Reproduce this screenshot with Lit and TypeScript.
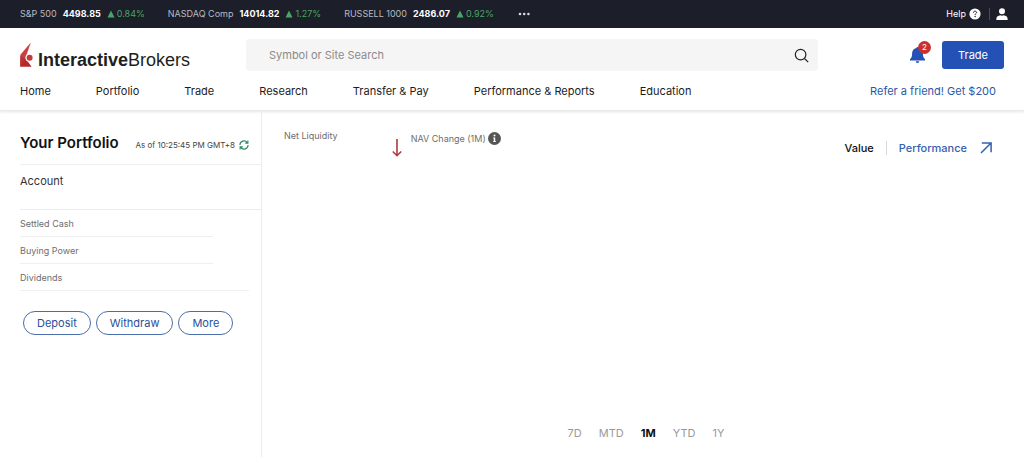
import { LitElement, html, css } from "lit";
import { customElement, state } from "lit/decorators.js";

interface Quote {
  name: string;
  price: string;
  change: string;
}

const QUOTES: Quote[] = [
  { name: "S&P 500", price: "4498.85", change: "0.84%" },
  { name: "NASDAQ Comp", price: "14014.82", change: "1.27%" },
  { name: "RUSSELL 1000", price: "2486.07", change: "0.92%" },
];

const NAV = [
  "Home",
  "Portfolio",
  "Trade",
  "Research",
  "Transfer & Pay",
  "Performance & Reports",
  "Education",
];

const PERIODS = ["7D", "MTD", "1M", "YTD", "1Y"];

const reset = css`
  * {
    box-sizing: border-box;
  }
  a {
    color: inherit;
    text-decoration: none;
  }
  button {
    font: inherit;
    color: inherit;
    background: none;
    border: 0;
    padding: 0;
    margin: 0;
    cursor: pointer;
  }
  svg {
    display: block;
    flex: none;
  }
`;

@customElement("ticker-bar")
class TickerBar extends LitElement {
  static styles = [
    reset,
    css`
      :host {
        display: flex;
        justify-content: space-between;
        align-items: center;
        height: 28px;
        padding: 0 16px 0 20px;
        background: #1c1e2a;
        color: #fff;
        font-size: 9px;
        line-height: 12px;
        white-space: nowrap;
      }
      .quotes,
      .tools,
      .quote,
      .change,
      .help {
        display: flex;
        align-items: center;
      }
      .quotes {
        gap: 23px;
      }
      .quote {
        gap: 6px;
      }
      .name {
        color: #b9bac0;
      }
      .price {
        font-weight: 700;
      }
      .change {
        gap: 2px;
        color: #4aa564;
      }
      .tools {
        gap: 6px;
      }
      .help {
        gap: 3px;
        padding-right: 2px;
      }
      .rule {
        width: 1px;
        height: 12px;
        background: #4b4d58;
      }
    `,
  ];

  render() {
    return html`
      <div class="quotes">
        ${QUOTES.map(
          (q) => html`<div class="quote">
            <span class="name">${q.name}</span>
            <span class="price">${q.price}</span>
            <span class="change">
              <svg width="8" height="8" viewBox="0 0 8 8"><path d="M4 .5 7.5 7.5H.5z" fill="currentColor" /></svg>
              ${q.change}
            </span>
          </div>`
        )}
        <button aria-label="More quotes">
          <svg width="14" height="6" viewBox="0 0 14 6" fill="#d8d9dd">
            <circle cx="3" cy="3" r="1.3" /><circle cx="7.2" cy="3" r="1.3" /><circle cx="11.4" cy="3" r="1.3" />
          </svg>
        </button>
      </div>
      <div class="tools">
        <a class="help" href="#">
          Help
          <svg width="12" height="12" viewBox="0 0 12 12">
            <circle cx="6" cy="6" r="5.6" fill="#fff" />
            <path d="M4.5 4.7C4.5 3.7 5.1 3.2 6 3.2s1.6.5 1.6 1.3c0 1-1.5 1.1-1.5 2.3" fill="none" stroke="#1c1e2a" stroke-width="1" />
            <circle cx="6.1" cy="8.5" r=".7" fill="#1c1e2a" />
          </svg>
        </a>
        <span class="rule"></span>
        <button aria-label="Account">
          <svg width="12" height="14" viewBox="0 0 12 14" fill="#fff">
            <circle cx="6" cy="4.3" r="3" />
            <path d="M.4 12.9v-1.4C.4 9.8 2.4 8.7 4.2 8.300c1.100.5 2.500.5 3.600 0 1.800.4 3.800 1.500 3.800 3.200v1.400z" />
          </svg>
        </button>
      </div>
    `;
  }
}

@customElement("site-header")
class SiteHeader extends LitElement {
  static styles = [
    reset,
    css`
      :host {
        display: block;
        background: #fff;
        border-bottom: 1px solid #e9e9e9;
        box-shadow: 0 1px 3px rgba(0, 0, 0, 0.1);
        padding: 11px 20px 0;
      }
      .top {
        display: grid;
        grid-template-columns: 226px minmax(0, 1fr) 186px;
        height: 32px;
      }
      .logo {
        display: flex;
        align-items: center;
        gap: 5px;
        font-family: "Liberation Sans", Arial, sans-serif;
        font-size: 18px;
        line-height: 20px;
        color: #1e1e20;
      }
      .word {
        padding-top: 10px;
      }
      .search {
        display: flex;
        align-items: center;
        background: #f5f5f5;
        border-radius: 4px;
        padding: 0 9px 0 23px;
      }
      .field {
        flex: 1;
        min-width: 0;
        font: inherit;
        line-height: 16px;
        color: #333;
        background: none;
        border: 0;
        outline: 0;
        padding: 0;
      }
      .field::placeholder {
        color: #8b8b8b;
        opacity: 1;
      }
      .actions {
        display: flex;
        justify-content: flex-end;
        align-items: center;
        gap: 16px;
      }
      .bell {
        position: relative;
      }
      .badge {
        position: absolute;
        top: -5px;
        right: -5px;
        width: 13px;
        height: 13px;
        border-radius: 50%;
        background: #c9302f;
        color: #fff;
        font-size: 8px;
        line-height: 13px;
        text-align: center;
      }
      .trade {
        width: 62px;
        height: 28px;
        border-radius: 3px;
        background: #2351b5;
        color: #fff;
      }
      .bottom {
        display: flex;
        justify-content: space-between;
        padding: 12px 8px 11px 0;
        line-height: 16px;
        white-space: nowrap;
      }
      .links {
        display: flex;
        gap: 45px;
        color: #1c1c1e;
      }
      .refer {
        color: #2b57a5;
      }
    `,
  ];

  render() {
    return html`
      <div class="top">
        <a class="logo" href="#">
          <svg width="13" height="26" viewBox="0 0 13 26">
            <path d="M10.8.5.4 12.8V24.800L5.600 15.800z" fill="#cb4041" />
            <path d="M.4 17.500V24.800h11.200L5.600 16.500z" fill="#b5292c" />
            <path d="M.4 14v10.800L5.600 16z" fill="#bd3033" />
            <circle cx="9.500" cy="15.800" r="4" fill="#fff" />
            <circle cx="9.600" cy="15.800" r="3" fill="#c6393a" />
          </svg>
          <span class="word"><b>Interactive</b>Brokers</span>
        </a>
        <div class="search">
          <input class="field" type="text" aria-label="Symbol or Site Search" placeholder="Symbol or Site Search" />
          <button aria-label="Search">
            <svg width="15" height="15" viewBox="0 0 15 15" fill="none" stroke="#222" stroke-width="1.2">
              <circle cx="6.6" cy="6.6" r="5.3" /><path d="m10.5 10.5 3.7 3.7" />
            </svg>
          </button>
        </div>
        <div class="actions">
          <button class="bell" aria-label="Notifications">
            <svg width="17" height="18" viewBox="0 0 17 18" fill="#2351b5">
              <path d="M8.5 1c.7 0 1.1.4 1.2 1.1 2.5.6 4.200 2.600 4.200 5.200 0 3.300.500 4.500 2.100 5.900v1.300H1v-1.300c1.600-1.400 2.100-2.600 2.100-5.900 0-2.600 1.700-4.600 4.200-5.200C7.400 1.400 7.800 1 8.500 1z" />
              <path d="M6.700 15.300h3.600a1.800 1.800 0 0 1-3.600 0z" />
            </svg>
            <span class="badge">2</span>
          </button>
          <button class="trade">Trade</button>
        </div>
      </div>
      <nav class="bottom">
        <div class="links">${NAV.map((n) => html`<a href="#">${n}</a>`)}</div>
        <a class="refer" href="#">Refer a friend! Get $200</a>
      </nav>
    `;
  }
}

@customElement("portfolio-side")
class PortfolioSide extends LitElement {
  static styles = [
    reset,
    css`
      :host {
        display: block;
        border-right: 1px solid #ececec;
        padding-left: 20px;
        white-space: nowrap;
      }
      .head {
        display: flex;
        justify-content: space-between;
        align-items: center;
        height: 54px;
        padding: 10px 12px 0 0;
        border-bottom: 1px solid #efefef;
      }
      .title {
        margin: 0;
        font-size: 15px;
        line-height: 20px;
        font-weight: 600;
        color: #111;
      }
      .asof {
        display: flex;
        align-items: center;
        gap: 4px;
        padding-top: 4px;
        font-size: 8px;
        line-height: 12px;
        color: #444;
      }
      .account {
        height: 45px;
        padding-top: 8px;
        line-height: 16px;
        color: #333;
        border-bottom: 1px solid #ececec;
      }
      .rows {
        list-style: none;
        margin: 0;
        padding: 0 12px 0 0;
        font-size: 9px;
        line-height: 12px;
        color: #6e6e6e;
      }
      .row {
        height: 27px;
        padding-top: 8px;
        margin-right: 36px;
        border-bottom: 1px solid #efefef;
      }
      .row:last-child {
        margin-right: 0;
      }
      .buttons {
        display: flex;
        gap: 5px;
        padding: 20px 3px;
      }
      .pill {
        height: 24px;
        padding: 0 13px;
        border: 1px solid #4a6ca8;
        border-radius: 12px;
        color: #2b509b;
      }
    `,
  ];

  render() {
    return html`
      <div class="head">
        <h1 class="title">Your Portfolio</h1>
        <div class="asof">
          As of 10:25:45 PM GMT+8
          <button aria-label="Refresh">
            <svg width="10" height="10" viewBox="0 0 10 10" fill="none" stroke="#2f8a62" stroke-width="1.1">
              <path d="M.9 5A4.1 4.1 0 0 1 8.3 2.600M9.100 5A4.100 4.100 0 0 1 1.700 7.400M8.900.4v2.700H6.200M1.100 9.600V6.900h2.700" />
            </svg>
          </button>
        </div>
      </div>
      <div class="account">Account</div>
      <ul class="rows">
        ${["Settled Cash", "Buying Power", "Dividends"].map((r) => html`<li class="row">${r}</li>`)}
      </ul>
      <div class="buttons">
        ${["Deposit", "Withdraw", "More"].map((b) => html`<button class="pill">${b}</button>`)}
      </div>
    `;
  }
}

@customElement("portfolio-chart")
class PortfolioChart extends LitElement {
  @state() private period = "1M";

  static styles = [
    reset,
    css`
      :host {
        display: flex;
        flex-direction: column;
        justify-content: space-between;
        padding: 19px 32px 16px 22px;
        white-space: nowrap;
      }
      .head,
      .stats,
      .nav-change,
      .label,
      .views {
        display: flex;
      }
      .head {
        justify-content: space-between;
        align-items: flex-start;
      }
      .stats {
        gap: 54px;
        font-size: 9px;
        line-height: 12px;
        color: #6e6e6e;
      }
      .nav-change {
        gap: 9px;
        align-items: flex-start;
      }
      .nav-change > svg {
        margin-top: 8px;
      }
      .label {
        align-items: center;
        gap: 2px;
        padding-top: 2px;
      }
      .views {
        align-items: center;
        gap: 12px;
        padding-top: 10px;
        line-height: 16px;
        font-weight: 500;
      }
      .value {
        color: #111;
      }
      .perf {
        color: #3560ae;
      }
      .rule {
        width: 1px;
        height: 14px;
        background: #d8d8d8;
      }
      .periods {
        display: flex;
        justify-content: center;
        gap: 17px;
        padding-left: 16px;
        line-height: 16px;
        color: #9a9a9a;
      }
      .active {
        color: #111;
        font-weight: 700;
      }
    `,
  ];

  render() {
    return html`
      <div class="head">
        <div class="stats">
          <span>Net Liquidity</span>
          <div class="nav-change">
            <svg width="10" height="20" viewBox="0 0 10 20" fill="none" stroke="#b03a3c" stroke-width="1.6">
              <path d="M5 1v17M.8 13.5 5 17.700l4.200-4.200" />
            </svg>
            <span class="label">
              NAV Change (1M)
              <svg width="13" height="13" viewBox="0 0 13 13">
                <circle cx="6.5" cy="6.5" r="6.5" fill="#555" />
                <circle cx="6.5" cy="3.5" r="1" fill="#fff" />
                <path d="M5.200 5.500h2v3.700h.8v.9H5v-.9h.8V6.400h-.6z" fill="#fff" />
              </svg>
            </span>
          </div>
        </div>
        <div class="views">
          <button class="value">Value</button>
          <span class="rule"></span>
          <button class="perf">Performance</button>
          <button class="perf" aria-label="Open">
            <svg width="13" height="12" viewBox="0 0 13 12" fill="none" stroke="currentColor" stroke-width="1.5">
              <path d="M2 11 11.800 1.200M2.800 1h9.300v9.300" />
            </svg>
          </button>
        </div>
      </div>
      <div class="periods">
        ${PERIODS.map(
          (p) => html`<button class=${p === this.period ? "active" : ""} @click=${() => (this.period = p)}>${p}</button>`
        )}
      </div>
    `;
  }
}

@customElement("app-root")
class AppRoot extends LitElement {
  static styles = css`
    :host {
      display: flex;
      flex-direction: column;
      min-height: 100vh;
      background: #fff;
      font-family: Inter, "Noto Sans", sans-serif;
      font-size: 11px;
      line-height: 16px;
    }
    .body {
      flex: 1;
      display: grid;
      grid-template-columns: 262px minmax(0, 1fr);
    }
  `;

  render() {
    return html`
      <ticker-bar></ticker-bar>
      <site-header></site-header>
      <main class="body">
        <portfolio-side></portfolio-side>
        <portfolio-chart></portfolio-chart>
      </main>
    `;
  }
}
